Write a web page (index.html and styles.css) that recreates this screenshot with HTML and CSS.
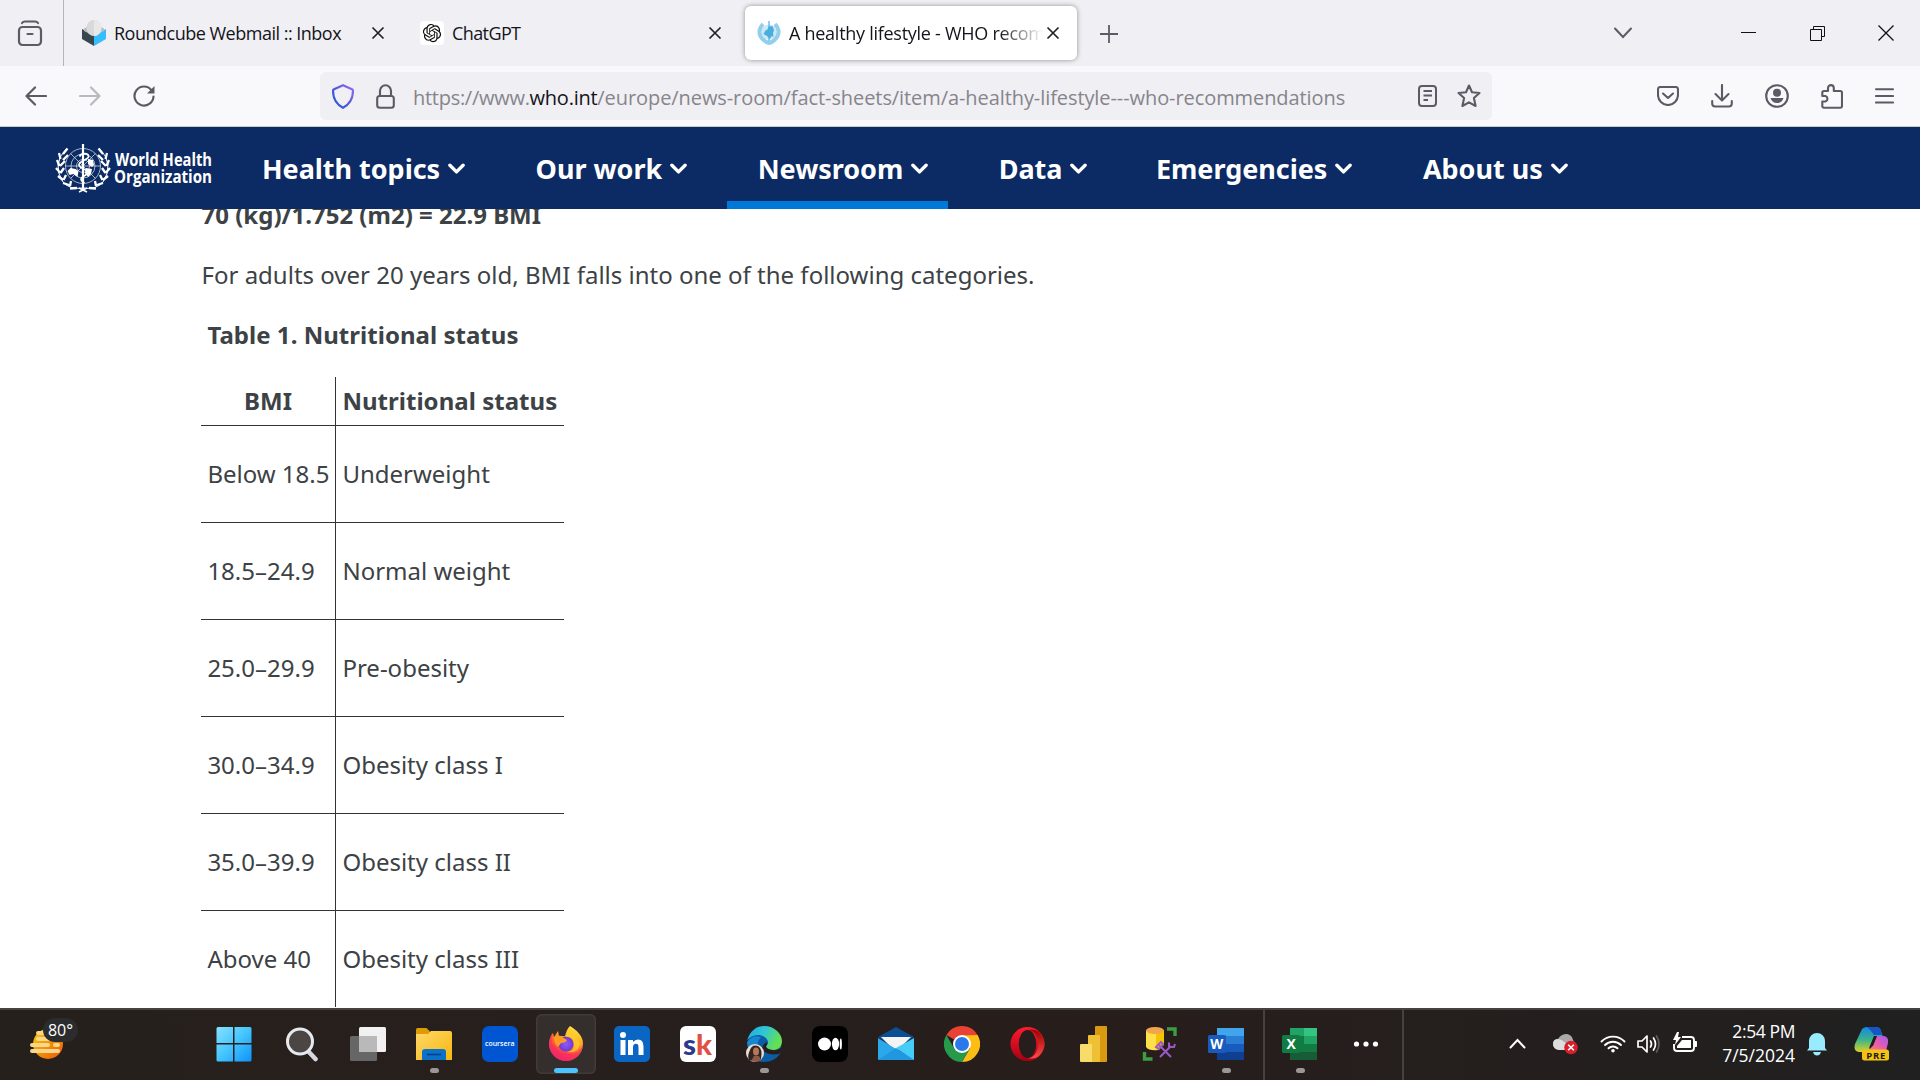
FILE: index.html
```html
<!DOCTYPE html>
<html lang="en">
<head>
<meta charset="utf-8">
<title>A healthy lifestyle - WHO recommendations</title>
<link rel="stylesheet" href="styles.css">
</head>
<body>
<div class="screen">
  <header class="tabstrip">
    <div class="history"><svg width="26" height="28" viewBox="0 0 26 28" fill="none" stroke="#5b5b66" stroke-width="2.2" stroke-linecap="round" stroke-linejoin="round"><path d="M5 3q1-1.500 3-1.500h10q2 0 3 1.500"/><rect x="2" y="7" width="22" height="18" rx="3.500"/><path d="M10.500 14h5"/></svg></div>
    <div class="tab tab-mail">
      <svg width="24" height="26" viewBox="0 0 24 26"><path d="M0 9l12 6v11L0 19z" fill="#37474f"/><path d="M24 9l-12 6v11l12-7z" fill="#35beff"/><path d="M2 8.500L12 3l10 5.500v2.500l-10 5-10-5z" fill="#b9bdc0"/><ellipse cx="12" cy="8" rx="7.500" ry="8" fill="#d9d9d9"/><path d="M12 0a7.500 8 0 0 1 0 16z" fill="#e8e8e8"/></svg>
      <span class="tab-title t1">Roundcube Webmail :: Inbox</span>
      <svg class="x" width="14" height="14" viewBox="0 0 14 14"><path d="M1.500 1.500l11 11m0-11l-11 11"/></svg>
    </div>
    <div class="tab tab-chat">
      <svg width="24" height="24" viewBox="0 0 24 24"><rect width="24" height="24" rx="4" fill="#fff"/><path transform="translate(2.900 2.900) scale(.76)" fill="#111" d="M22.2819 9.8211a5.9847 5.9847 0 0 0-.5157-4.9108 6.0462 6.0462 0 0 0-6.5098-2.9A6.0651 6.0651 0 0 0 4.9807 4.1818a5.9847 5.9847 0 0 0-3.9977 2.9 6.0462 6.0462 0 0 0 .7427 7.0966 5.98 5.98 0 0 0 .511 4.9107 6.051 6.051 0 0 0 6.5146 2.9001A5.9847 5.9847 0 0 0 13.2599 24a6.0557 6.0557 0 0 0 5.7718-4.2058 5.9894 5.9894 0 0 0 3.9977-2.9001 6.0557 6.0557 0 0 0-.7475-7.0729zm-9.022 12.6081a4.4755 4.4755 0 0 1-2.8764-1.0408l.1419-.0804 4.7783-2.7582a.7948.7948 0 0 0 .3927-.6813v-6.7369l2.02 1.1686a.071.071 0 0 1 .038.052v5.5826a4.504 4.504 0 0 1-4.4945 4.4944zm-9.6607-4.1254a4.4708 4.4708 0 0 1-.5346-3.0137l.142.0852 4.783 2.7582a.7712.7712 0 0 0 .7806 0l5.8428-3.3685v2.3324a.0804.0804 0 0 1-.0332.0615L9.74 19.9502a4.4992 4.4992 0 0 1-6.1408-1.6464zM2.3408 7.8956a4.485 4.485 0 0 1 2.3655-1.9728V11.6a.7664.7664 0 0 0 .3879.6765l5.8144 3.3543-2.0201 1.1685a.0757.0757 0 0 1-.071 0l-4.8303-2.7865A4.504 4.504 0 0 1 2.3408 7.872zm16.5963 3.8558L13.1038 8.364 15.1192 7.2a.0757.0757 0 0 1 .071 0l4.8303 2.7913a4.4944 4.4944 0 0 1-.6765 8.1042v-5.6772a.79.79 0 0 0-.407-.667zm2.0107-3.0231l-.142-.0852-4.7735-2.7818a.7759.7759 0 0 0-.7854 0L9.409 9.2297V6.8974a.0662.0662 0 0 1 .0284-.0615l4.8303-2.7866a4.4992 4.4992 0 0 1 6.6802 4.66zM8.3065 12.863l-2.02-1.1638a.0804.0804 0 0 1-.038-.0567V6.0742a4.4992 4.4992 0 0 1 7.3757-3.4537l-.142.0805L8.704 5.459a.7948.7948 0 0 0-.3927.6813zm1.0976-2.3654l2.602-1.4998 2.6069 1.4998v2.9994l-2.5974 1.4997-2.6067-1.4997Z"/></svg>
      <span class="tab-title t2">ChatGPT</span>
      <svg class="x" width="14" height="14" viewBox="0 0 14 14"><path d="M1.500 1.500l11 11m0-11l-11 11"/></svg>
    </div>
    <div class="tab tab-active">
      <svg width="24" height="26" viewBox="0 0 24 26" fill="none"><path d="M6 4Q-1 12 6 19.500q3 3 6 3.500 3-.5 6-3.500 7-7.500 0-15.500" stroke-width="4" stroke="#93cfed"/><circle cx="12" cy="12" r="7.500" fill="#cbe8f6"/><path d="M12 1v20" stroke="#6dbfe6" stroke-width="1.500"/><path d="M6.500 14l2-3.500 2-1 1-3 4-.5 1.500 4-1 3 .5 4-2-1-1.500 3-3-3z" fill="#48aede"/></svg>
      <span class="tab-title t3">A healthy lifestyle - WHO recommendations</span>
      <svg class="x" width="14" height="14" viewBox="0 0 14 14"><path d="M1.500 1.500l11 11m0-11l-11 11"/></svg>
    </div>
    <svg class="newtab" width="18" height="18" viewBox="0 0 18 18"><path d="M9 0v18M0 9h18" stroke="#5b5b66" stroke-width="1.800"/></svg>
    <div class="winctl">
      <svg width="18" height="12" viewBox="0 0 18 12" fill="none" stroke="#5b5b66" stroke-width="2" stroke-linecap="round"><path d="M1 1.500l8 8.500 8-8.500"/></svg>
      <svg class="min" width="15" height="2"><path d="M0 .5h15" stroke="#111"/></svg>
      <svg class="rest" width="15" height="15" viewBox="0 0 15 15" fill="none" stroke="#111"><path d="M.5 3.500h11v11H.5zM3.500 3.500v-3h11v10h-3"/></svg>
      <svg class="cls" width="16" height="16" viewBox="0 0 16 16" stroke="#111" stroke-width="1.300"><path d="M.5.5l15 15m0-15l-15 15"/></svg>
    </div>
  </header>

  <div class="toolbar">
    <div class="navbtns">
      <svg width="22" height="20" viewBox="0 0 22 20"><path d="M21 10H2M10 1.500L1.500 10l8.500 8.500"/></svg>
      <svg class="off" width="22" height="20" viewBox="0 0 22 20"><path d="M1 10h19M12 1.500l8.500 8.500-8.500 8.500"/></svg>
      <svg width="22" height="22" viewBox="0 0 22 22"><path d="M18.600 5.300A9.500 9.500 0 1 0 20.500 11.500"/><path d="M21.500 1v7.500h-7.500z" fill="#5b5b66" stroke="none"/></svg>
    </div>
    <div class="urlbar">
      <svg width="22" height="25" viewBox="0 0 22 25" fill="none"><defs><linearGradient id="sh" x1="0" y1="1" x2="1" y2="0"><stop offset="0" stop-color="#1d5be0"/><stop offset=".5" stop-color="#5558d8"/><stop offset="1" stop-color="#9a6bf5"/></linearGradient></defs><path d="M11 1.200l9 4q1 .5 1 1.500c0 8-3 13.500-10 17.100C4 20.200 1 14.700 1 6.700q0-1 1-1.500z" stroke="url(#sh)" stroke-width="2.200" stroke-linejoin="round"/></svg>
      <svg class="lock" width="19" height="25" viewBox="0 0 19 25" fill="none" stroke="#5b5b66" stroke-width="2.100"><rect x="1.200" y="12" width="16.600" height="11.800" rx="2.500"/><path d="M4 12V6.800a5.500 5.500 0 0 1 11 0V12"/></svg>
      <span class="url"><span class="scheme">https://www.</span><b>who.int</b><span>/europe/news-room/fact-sheets/item/a-healthy-lifestyle---who-recommendations</span></span>
      <svg class="reader" width="19" height="22" viewBox="0 0 19 22" fill="none" stroke="#5b5b66" stroke-width="2"><rect x="1" y="1" width="17" height="20" rx="3"/><path d="M5.500 6H14M5.500 10.500H14M5.500 15h4.500"/></svg>
      <svg width="24" height="24" viewBox="0 0 24 24" fill="none" stroke="#5b5b66" stroke-width="2.100" stroke-linejoin="round"><path d="M12 1.500l3 6.700 7.500.8-5.600 5 1.700 8L12 18.300 5.400 22l1.700-8-5.600-5 7.500-.8z"/></svg>
    </div>
    <div class="tools">
      <svg width="22" height="20" viewBox="0 0 22 20"><path d="M3.500 1h15q2.500 0 2.500 2.500V9a10 10 0 0 1-20 0V3.500Q1 1 3.500 1z"/><path d="M6 7.500l5 4.500 5-4.500"/></svg>
      <svg width="22" height="24" viewBox="0 0 22 24"><path d="M11 1v15M4.500 10l6.500 6.500 6.500-6.500M1.200 17v2.500q0 3 3 3h13.600q3 0 3-3V17"/></svg>
      <svg width="24" height="24" viewBox="0 0 24 24"><circle cx="12" cy="12" r="10.800"/><g fill="#5b5b66" stroke="none"><circle cx="12" cy="8.800" r="4"/><path d="M5.500 14h13q-1.500 5-6.500 5t-6.500-5z"/></g></svg>
      <svg width="22" height="25" viewBox="0 0 22 25"><path d="M7 7V4a2.900 2.900 0 0 1 5.800 0v3h6.500q1.700 0 1.700 1.700V22q0 1.700-1.700 1.700H3q-1.700 0-1.700-1.700v-4.500h3.200a2.900 2.900 0 0 0 0-5.500H1.300V8.700Q1.300 7 3 7z"/></svg>
      <svg width="19" height="16" viewBox="0 0 19 16"><path d="M1 1.200h17M1 8h17M1 14.500h17"/></svg>
    </div>
  </div>

  <nav class="who">
    <svg class="emblem" width="56" height="50" viewBox="0 0 56 50" fill="none" stroke="#fff"><g stroke-width=".8" opacity=".8"><circle cx="28" cy="23" r="17.500"/><circle cx="28" cy="23" r="12"/><circle cx="28" cy="23" r="6.500"/><path d="M10 23h36M15.500 10.500l25 25M40.500 10.500l-25 25"/></g><path d="M28 1v45" stroke-width="2.200"/><path d="M24.500 13.500c2-4 9-3.500 9 0s-9 4-9.500 8 8 4 8 8-6 3.500-6 6.500 2 3 3.500 4" stroke-width="1.700"/><path d="M12.500 28l3-3 5 1 3 2-1 6-4-3-4 1zM33 16l5 1 1 5-2 2-4-3zM31 25l6 1-1 5-3 3-3-4z" fill="#fff" stroke="none"/><g id="lf" stroke-width="1"><path d="M12 5Q-4 21 8 39q7 8 20 6"/><path stroke-width="2.300" d="M12.500 5.500L8 11M4 10l1.500 6M2 17l2.500 6M1 25l4.500 5M3 33l5 4M8 40l6 2M15 45.500l7-.5M13 12l-5 5M10 18l-5 5M9 25l-3.500 5M11 32l-2.500 5M16 38l-1 5"/><path stroke-width="1.500" d="M24 49l8-4"/></g><use href="#lf" transform="matrix(-1 0 0 1 56 0)"/></svg>
    <svg class="wordmark" width="103" height="48" viewBox="0 0 103 48" fill="#fff"><text x="1" y="22" textLength="97" lengthAdjust="spacingAndGlyphs">World Health</text><text x="0" y="39" textLength="98" lengthAdjust="spacingAndGlyphs">Organization</text></svg>
    <ul class="menu">
      <li><span>Health topics</span><svg class="chev" viewBox="0 0 18 12"><path d="M2 2l7 7 7-7"/></svg></li>
      <li><span>Our work</span><svg class="chev" viewBox="0 0 18 12"><path d="M2 2l7 7 7-7"/></svg></li>
      <li class="current"><span>Newsroom</span><svg class="chev" viewBox="0 0 18 12"><path d="M2 2l7 7 7-7"/></svg></li>
      <li><span>Data</span><svg class="chev" viewBox="0 0 18 12"><path d="M2 2l7 7 7-7"/></svg></li>
      <li class="emergencies"><span>Emergencies</span><svg class="chev" viewBox="0 0 18 12"><path d="M2 2l7 7 7-7"/></svg></li>
      <li><span>About us</span><svg class="chev" viewBox="0 0 18 12"><path d="M2 2l7 7 7-7"/></svg></li>
    </ul>
  </nav>

  <main class="article">
    <p class="formula">70 (kg)/1.752 (m2) = 22.9 BMI</p>
    <p>For adults over 20 years old, BMI falls into one of the following categories.</p>
    <p class="caption">Table 1. Nutritional status</p>
    <table>
      <thead><tr><th>BMI</th><th>Nutritional status</th></tr></thead>
      <tbody>
        <tr><td>Below 18.5</td><td>Underweight</td></tr>
        <tr><td>18.5–24.9</td><td>Normal weight</td></tr>
        <tr><td>25.0–29.9</td><td>Pre-obesity</td></tr>
        <tr><td>30.0–34.9</td><td>Obesity class I</td></tr>
        <tr><td>35.0–39.9</td><td>Obesity class II</td></tr>
        <tr><td>Above 40</td><td>Obesity class III</td></tr>
      </tbody>
    </table>
  </main>

  <footer class="taskbar">
    <svg width="0" height="0" class="defs"><defs>
      <linearGradient id="sun" x1="0" y1="0" x2="1" y2="1"><stop offset="0" stop-color="#ffd000"/><stop offset="1" stop-color="#e8550c"/></linearGradient>
      <linearGradient id="win" gradientUnits="userSpaceOnUse" x1="0" y1="0" x2="35" y2="35"><stop offset="0" stop-color="#8be2ff"/><stop offset=".5" stop-color="#46c6ff"/><stop offset="1" stop-color="#0f94fa"/></linearGradient>
      <linearGradient id="fold" x1="0" y1="0" x2="1" y2="1"><stop offset="0" stop-color="#ffd86b"/><stop offset="1" stop-color="#f7b70c"/></linearGradient>
      <linearGradient id="ff" x1=".8" y1="0" x2=".3" y2="1"><stop offset="0" stop-color="#fff04a"/><stop offset=".35" stop-color="#ffa51f"/><stop offset=".7" stop-color="#ff4b3c"/><stop offset="1" stop-color="#e31587"/></linearGradient>
      <radialGradient id="ffg"><stop offset="0" stop-color="#9059ff"/><stop offset="1" stop-color="#6c3bd0"/></radialGradient>
      <linearGradient id="e1" x1="0" y1="0" x2="1" y2=".4"><stop offset="0" stop-color="#1ea8dd"/><stop offset=".5" stop-color="#2fc5d8"/><stop offset="1" stop-color="#66e04e"/></linearGradient>
      <linearGradient id="op" x1="0" y1="0" x2="0" y2="1"><stop offset="0" stop-color="#ff1b2d"/><stop offset="1" stop-color="#a70014"/></linearGradient>
      <linearGradient id="op2" x1="0" y1="0" x2="0" y2="1"><stop offset="0" stop-color="#9c0000"/><stop offset="1" stop-color="#ff4b4b"/></linearGradient>
      <linearGradient id="co" x1="0" y1="0" x2="0" y2="1"><stop offset="0" stop-color="#1387ea"/><stop offset=".5" stop-color="#3bb28b"/><stop offset="1" stop-color="#d8d325"/></linearGradient>
      <linearGradient id="co2" x1="1" y1="0" x2="0" y2="1"><stop offset="0" stop-color="#9f5cf0"/><stop offset=".5" stop-color="#e65bb0"/><stop offset="1" stop-color="#ff8a58"/></linearGradient>
    </defs></svg>
    <div class="weather">
      <svg width="34" height="34" viewBox="0 0 34 34"><circle cx="18" cy="17" r="15" fill="url(#sun)"/><g stroke="#f8d78d" stroke-width="4" stroke-linecap="round"><path d="M8 12h14M2 18h16M25 18h3M2 24h26M8 6h6"/></g></svg>
      <span class="badge">80°</span>
    </div>
    <div class="apps">
      <div class="app start"><svg viewBox="0 0 36 36"><path d="M2 1h15v16H.5V2.500Q.5 1 2 1zM18.500 1H34q1.500 0 1.500 1.500V17h-17zM.5 18.500h16.500v17H2q-1.500 0-1.500-1.500zM18.500 18.500h17V34q0 1.500-1.500 1.500H18.500z" fill="url(#win)"/></svg></div>
      <div class="app"><svg viewBox="0 0 36 36"><path d="M24 25l7.500 8" stroke="#d6d6df" stroke-width="4.600" stroke-linecap="round"/><circle cx="16" cy="15.500" r="12.500" fill="#4b4644" stroke="#e6e9ee" stroke-width="3"/></svg></div>
      <div class="app"><svg viewBox="0 0 36 36"><rect x="9" y="1" width="27" height="25" rx="1.500" fill="#f1f1f1"/><rect x="0" y="10" width="27" height="25" rx="1.500" fill="#666"/><path d="M9 10h18v16H9z" fill="#b9b9b9"/></svg></div>
      <div class="app run"><svg viewBox="0 0 36 36"><path d="M0 8V3.500Q0 2 1.500 2h9L14 5.500V9H0z" fill="#dd9b05"/><path d="M0 8h12l3-3h19q2 0 2 2v27H0z" fill="url(#fold)"/><path d="M6 34V26q0-3 3-3h18q3 0 3 3v8z" fill="#0b72c8"/><path d="M11 28.500h14" stroke="#063f85" stroke-width="1.600"/></svg></div>
      <div class="app"><svg viewBox="0 0 36 36"><rect width="36" height="36" rx="7" fill="#0056d2"/><text x="3" y="20" font-family="Open Sans,sans-serif" font-weight="600" font-size="7.500" textLength="29.500" lengthAdjust="spacingAndGlyphs" fill="#fff">coursera</text></svg></div>
      <div class="app focus"><svg viewBox="0 0 36 36"><path d="M22 0c6 4 13 9 13 18a17 17 0 0 1-34 0C1 13 3 9 5 7l1 4 4-6 1 5h6C18 6 19 3 22 0z" fill="url(#ff)"/><path d="M1 18a17 17 0 0 0 34 0q-3 10-14 10T4 17q-1-4 1-9-4 4-4 10z" fill="#f52d62" opacity=".65"/><circle cx="18" cy="18" r="7.500" fill="url(#ffg)"/><path d="M6 11c5-1 6-2 8 0l5 3q-1 3-6 3l-3 4q-4-3-4-10z" fill="#ff9b22"/><path d="M18 11q8-1 8 8 0 6-7 7 11 2 13-8-2-9-10-16-4 4-4 9z" fill="#ffcf2c" opacity=".75"/></svg></div>
      <div class="app"><svg viewBox="0 0 36 36"><rect width="36" height="36" rx="5" fill="#0a66c2"/><g fill="#fff"><circle cx="9" cy="9" r="3"/><path d="M6.500 14h5v15h-5zM14 14h5v2q2-2.500 5-2.500 5.500 0 5.500 7V29h-5v-8q0-3.300-2.600-3.300T19 21v8h-5z"/></g></svg></div>
      <div class="app"><svg viewBox="0 0 36 36"><rect width="36" height="36" rx="6" fill="#fff"/><text x="3" y="28.500" font-family="Lato,sans-serif" font-weight="900" font-size="28" textLength="29" lengthAdjust="spacingAndGlyphs" fill="#2b3990">s<tspan fill="#df5142">k</tspan></text></svg></div>
      <div class="app run"><svg viewBox="0 0 36 36"><path d="M2 15A17 17 0 0 1 34 28q-6 8-16 8Q1 36 2 15z" fill="#0c5ca6"/><path d="M1 15C4 4 11 0 18 0c11 0 18 8 18 15 0 6-4 9-9 9-5 0-7-2-7-3s2-2 2-5-4-7-10-7S2 13 1 15z" fill="url(#e1)"/><path d="M1 16q6-8 14-5-7 7-1 19-12 1-13-14z" fill="#1687d0"/><path d="M21 16q-5 3-5 7 4 7 17 5l3-3v-4q-4 4-9 3-7-1-7-4 2-2 1-4z" fill="#261e1c"/><circle cx="9" cy="27" r="9" fill="#e9dfd5"/><path d="M3 34q-2-4 1-10 2-6 8-4 5 3 3 13l-3 3z" fill="#322520"/><ellipse cx="10" cy="25.500" rx="3" ry="4" fill="#b77758"/><path d="M5 35l3-5h5l2 4-4 2z" fill="#8d5948"/></svg></div>
      <div class="app"><svg viewBox="0 0 36 36"><rect width="36" height="36" rx="8" fill="#000"/><g fill="#fff"><circle cx="12.500" cy="18" r="6.500"/><ellipse cx="23.500" cy="18" rx="3.600" ry="6.300"/><ellipse cx="28.800" cy="18" rx="1.100" ry="5.500"/></g></svg></div>
      <div class="app"><svg viewBox="0 0 36 36"><path d="M0 11L18 1l18 10-18 12z" fill="#0b4f93"/><path d="M3 11h30L18 26z" fill="#f4f4f4"/><path d="M0 12l36 22H1q-1 0-1-1z" fill="#2aa8ea"/><path d="M36 12v21q0 1-1 1L18 22z" fill="#45ccf7"/><path d="M0 34h36L18 22z" fill="#2097e0"/></svg></div>
      <div class="app"><svg viewBox="0 0 36 36"><path d="M18 18L2.400 9A18 18 0 0 1 33.600 9z" fill="#e94235"/><path d="M33.600 9A18 18 0 0 1 18 36l7.800-13.500V9z" fill="#fdbd14"/><path d="M2.400 9A18 18 0 0 0 18 36l7.800-13.500-15.600 0z" fill="#269a4a"/><path d="M18 9h15.600L26 20z" fill="#fdbd14"/><path d="M2.400 9h31.200L18 9.500z" fill="#e94235"/><circle cx="18" cy="18" r="9" fill="#fff"/><circle cx="18" cy="18" r="7" fill="#2a79ea"/></svg></div>
      <div class="app"><svg viewBox="0 0 36 36"><ellipse cx="17.500" cy="18" rx="17" ry="17" fill="url(#op)"/><path d="M18 4a10 14 0 0 1 0 28q7 2 12-3 9-11 0-22-5-5-12-3z" fill="url(#op2)"/><ellipse cx="17.500" cy="18" rx="8.700" ry="14" fill="#261e1c"/></svg></div>
      <div class="app"><svg viewBox="0 0 36 36"><rect x="19" y="0" width="12" height="36" rx="1" fill="#d99910"/><rect x="12" y="9" width="12" height="27" rx="1" fill="#efc033"/><rect x="4" y="18" width="12" height="18" rx="1" fill="#f8dc69"/></svg></div>
      <div class="app"><svg viewBox="0 0 36 36"><path d="M4 4v17q3 4 12 3l6-6V4z" fill="#ffe04a"/><path d="M14 6l8-2v15l-8 5z" fill="#f5c400"/><ellipse cx="13" cy="4.500" rx="9" ry="3.500" fill="#f0a64d"/><path d="M25 3h8v7M2.500 26v7h8" fill="none" stroke="#3f9c43" stroke-width="3.400"/><path d="M17 19l12 12M29 20L18 31" stroke="#9b59c6" stroke-width="2"/><path d="M14 21l5-5 2 2-4 5zM27 16.500v4.500h5l1-3" fill="none" stroke="#9b59c6" stroke-width="2"/></svg></div>
      <div class="app run"><svg viewBox="0 0 36 36"><path d="M9 2h27v8H9z" fill="#41a5ee"/><path d="M9 10h27v8H9z" fill="#2b7cd3"/><path d="M9 18h27v8H9z" fill="#185abd"/><path d="M9 26h27v8H9z" fill="#103f91"/><rect x="0" y="9" width="18" height="18" rx="1.500" fill="#185abd"/><text x="2.300" y="23.200" font-family="Open Sans,sans-serif" font-weight="700" font-size="14" textLength="13" lengthAdjust="spacingAndGlyphs" fill="#fff">W</text></svg></div>
      <div class="app run excel"><svg viewBox="0 0 36 36"><path d="M8 2h14v8H8z" fill="#21a366"/><path d="M22 2h13v8H22z" fill="#33c481"/><path d="M8 10h14v8H8z" fill="#107c41"/><path d="M22 10h13v8H22z" fill="#21a366"/><path d="M8 18h27v8H8z" fill="#107c41"/><path d="M8 26h27v8H8z" fill="#185c37"/><rect x="0" y="9" width="18" height="18" rx="1.500" fill="#107c41"/><text x="4.500" y="23.200" font-family="Open Sans,sans-serif" font-weight="700" font-size="14" fill="#fff">X</text></svg></div>
      <div class="app more"><svg viewBox="0 0 36 36" fill="#fff"><circle cx="8.500" cy="18" r="2.600"/><circle cx="18" cy="18" r="2.600"/><circle cx="27.500" cy="18" r="2.600"/></svg></div>
    </div>
    <div class="tray">
      <svg width="17" height="11" viewBox="0 0 17 11" fill="none" stroke="#fff" stroke-width="2" stroke-linecap="round"><path d="M1.500 9.500l7-7.500 7 7.500"/></svg>
      <svg class="cloud" width="26" height="22" viewBox="0 0 26 22"><path d="M6 17q-6-1-6-6 0-4 5-5 3-5 9-5 5 1 6 6l3 5-5 5z" fill="#aaa"/><path d="M0 11q0-5 5-5 4 0 11 7l-4 4H6q-6-1-6-6z" fill="#ddd"/><circle cx="18" cy="14.500" r="6.800" fill="#d71f2b"/><path d="M15.200 11.700l5.600 5.600m0-5.600l-5.600 5.600" stroke="#fff" stroke-width="1.600"/></svg>
      <svg class="wifi" width="26" height="18" viewBox="0 0 26 18" fill="none" stroke="#fff" stroke-width="1.900" stroke-linecap="round"><path d="M1.500 6.500a16 16 0 0 1 23 0M5 10a11.300 11.300 0 0 1 16 0M8.500 13.300a6.400 6.400 0 0 1 9 0"/><circle cx="13" cy="15.800" r="1.800" fill="#fff" stroke="none"/></svg>
      <svg class="vol" width="24" height="20" viewBox="0 0 24 20" fill="none" stroke="#fff" stroke-width="1.700" stroke-linecap="round" stroke-linejoin="round"><path d="M1 7h4l5-5v16l-5-5H1zM13.500 7q2 3 0 6M16.500 4q4 6 0 12"/><path d="M19.500 2q5 8 0 16" stroke="#605c5b"/></svg>
      <svg class="batt" width="25" height="21" viewBox="0 0 25 21"><path d="M9 5h9q3 0 3 3v8q0 3-3 3H4q-3 0-3-3v-4" fill="none" stroke="#fff" stroke-width="1.900"/><path d="M22 9.500h1.500v5H22z" fill="#fff" stroke="#fff"/><path d="M9 8h9v8H4v-2zM4 0L0 8h3l-1 5 6-8H5l1-5z" fill="#fff"/></svg>
      <div class="clock"><span class="time">2:54 PM</span><span class="date">7/5/2024</span></div>
      <svg class="bell" width="20" height="24" viewBox="0 0 20 24" fill="#99ebff"><path d="M2 16V9a8 8 0 0 1 16 0v7l2 2.500H0zM6 20h8q-1 3.500-4 3.500T6 20z"/></svg>
      <svg class="copilot" width="36" height="36" viewBox="0 0 36 36"><path d="M8 3q2-2 5-2h9q4 0 5 4l2 6h-9l-5 13q-1 2-3 2H5q-6-1-4-8z" fill="url(#co)"/><path d="M13 1h9q4 0 5 4l1 4h-8l-3-4z" fill="#1655c4"/><path d="M23 10h7q5 1 4 7l-2 8H13l4-3z" fill="url(#co2)"/><path d="M20 10l-5 12 4-2 4-10z" fill="#221d1d"/><rect x="8" y="23.500" width="27" height="11" rx="2.500" fill="#f5c211"/><text x="12.300" y="32.500" font-family="Open Sans,sans-serif" font-weight="700" font-size="9.500" textLength="19" fill="#1b1b1b">PRE</text></svg>
    </div>
  </footer>
</div>
</body>
</html>
```
FILE: styles.css
```css
* { box-sizing: border-box; }
body { margin: 0; }
svg { display: block; flex: none; }
.screen {
  width: 1920px;
  height: 1080px;
  overflow: hidden;
  display: flex;
  flex-direction: column;
  background: #fff;
  font-family: "Open Sans", "Noto Sans", sans-serif;
}

/* tab strip */
.tabstrip { height: 66px; flex: none; display: flex; align-items: center; background: #f0eff4; }
.history { width: 64px; height: 66px; padding: 20px 0 0 17px; border-right: 1px solid #b5b4bb; }
.tab { display: flex; align-items: center; height: 54px; }
.tab-mail { width: 338px; padding: 0 17px 0 18px; }
.tab-chat { width: 343px; padding: 0 23px 0 18px; }
.tab-active { width: 332px; padding: 0 17px 0 12px; background: #fff; border-radius: 6px; box-shadow: 0 0 5px rgba(0, 0, 0, .4); }
.tab-title { font-size: 18px; line-height: 26px; color: #15141a; white-space: nowrap; }
.t1 { margin-left: 8px; letter-spacing: -.5px; }
.t2 { margin-left: 8px; letter-spacing: -.6px; }
.t3 {
  margin-left: 8px; width: 254px; overflow: hidden; letter-spacing: -.27px;
  -webkit-mask-image: linear-gradient(to right, #000 210px, transparent 254px);
  mask-image: linear-gradient(to right, #000 210px, transparent 254px);
}
.x { margin-left: auto; fill: none; stroke: #222; stroke-width: 1.7; }
.newtab { margin: 1px 0 0 23px; }
.winctl { margin-left: auto; display: flex; align-items: center; padding-right: 26px; }
.min { margin-left: 109px; }
.rest { margin-left: 54px; }
.cls { margin-left: 53px; }

/* toolbar */
.toolbar { height: 61px; flex: none; display: flex; align-items: flex-start; background: #f9f9fb; border-bottom: 1px solid #c9cbc5; }
.navbtns { width: 320px; height: 60px; display: flex; align-items: center; gap: 32px; padding-left: 25px; fill: none; stroke: #5b5b66; stroke-width: 2.2; stroke-linecap: round; stroke-linejoin: round; }
.off { opacity: .4; }
.urlbar { width: 1172px; height: 48px; margin-top: 6px; padding: 0 11px 0 12px; border-radius: 6px; background: #f0eff4; display: flex; align-items: center; }
.lock { margin-left: 22px; }
.url { margin-left: 18px; padding-top: 2px; font-size: 20px; letter-spacing: -.08px; color: #86858b; white-space: nowrap; }
.scheme { letter-spacing: -.28px; }
.url b { font-weight: 400; color: #15141a; letter-spacing: -.25px; }
.reader { margin-left: auto; margin-right: 20px; }
.tools { margin-left: auto; height: 60px; padding-right: 26px; display: flex; align-items: center; gap: 32px; fill: none; stroke: #5b5b66; stroke-width: 2.1; stroke-linecap: round; stroke-linejoin: round; }

/* site navigation */
.who { height: 82px; flex: none; display: flex; background: #0c2a63; color: #fff; padding-left: 55px; position: relative; z-index: 1; }
.emblem { margin-top: 16px; }
.wordmark { margin: 17px 14px 0 3px; font: 700 17.5px "Open Sans", sans-serif; }
.menu { list-style: none; margin: 0; padding: 0; display: flex; gap: 19.5px; }
.menu li { height: 82px; display: flex; padding: 0 20px 8px 31px; gap: 8px; font: 700 27px/84px "Noto Sans", sans-serif; letter-spacing: -.03px; white-space: nowrap; }
.menu .current { border-bottom: 8px solid #0078d7; padding-bottom: 0; }
.menu .emergencies { margin-left: -2px; }
.chev { width: 17px; height: 12px; margin-top: 36px; fill: none; stroke: #fff; stroke-width: 3.6; stroke-linecap: round; stroke-linejoin: round; }

/* article */
.article { height: 799px; flex: none; overflow: hidden; padding-left: 201px; color: #3c4245; font: 24px/36px "Noto Sans", sans-serif; }
.article p { margin: 0 0 24px .5px; }
.article .formula { margin-top: -12px; font-weight: 700; }
.article .caption { font-weight: 700; margin: 0 0 24px; padding-left: 6.5px; letter-spacing: .03px; }
table { border-collapse: separate; border-spacing: 0; table-layout: fixed; width: 363px; }
th, td { padding: 0 0 0 6.4px; text-align: left; white-space: nowrap; border-bottom: 1px solid #333; }
th { height: 49px; width: 135px; letter-spacing: .03px; }
th:first-child { text-align: center; padding: 0; }
th:first-child, td:first-child { border-right: 1px solid #333; }
th:last-child { width: 228px; }
td { height: 97px; }
tr:last-child td { border-bottom: 0; height: 96px; }

/* taskbar */
.taskbar { height: 72px; flex: none; display: flex; background: linear-gradient(90deg, #26201d, #271e1c 60%, #231f1e 85%, #202020); border-top: 2px solid #464240; color: #fff; }
.defs { position: absolute; }
.weather { width: 204px; padding: 17px 0 0 30px; position: relative; }
.badge { position: absolute; left: 43px; top: 8px; width: 35px; height: 24px; border-radius: 12px; background: #2b2c2d; font-size: 16px; line-height: 24px; text-align: center; }
.apps { display: flex; gap: 6px; }
.app { width: 60px; height: 60px; margin-top: 4px; padding: 12px 12px 0; border-radius: 6px; display: flex; flex-direction: column; align-items: center; }
.start { margin-right: 2px; }
.app svg { width: 36px; height: 36px; }
.run::after { content: ""; width: 9px; height: 5px; margin-top: 6px; border-radius: 3px; background: #9b9795; }
.focus { background: #342e2c; box-shadow: inset 0 0 0 1.5px #413b38; }
.focus::after { content: ""; width: 24px; height: 5px; margin-top: 6px; border-radius: 3px; background: #4cc2ff; }
.excel { margin: 0 0 0 1px; padding: 16px 0 0; height: 70px; width: 72px; border-radius: 0; border-left: 2px solid #464240; }
.more { margin: 0; padding: 16px 11px 0 0; height: 70px; width: 63px; border-radius: 0; border-right: 2px solid #464240; }
.tray { margin-left: auto; display: flex; align-items: center; width: 411px; height: 67px; }
.cloud { margin-left: 27px; }
.wifi { margin-left: 21px; }
.vol { margin-left: 11px; }
.batt { margin-left: 12px; margin-bottom: 3px; }
.clock { width: 97px; margin-top: -1px; display: flex; flex-direction: column; align-items: flex-end; font-size: 17.5px; line-height: 24px; white-space: nowrap; }
.time { letter-spacing: -.4px; }
.bell { margin-left: 12px; }
.copilot { margin-left: 27px; }
```
